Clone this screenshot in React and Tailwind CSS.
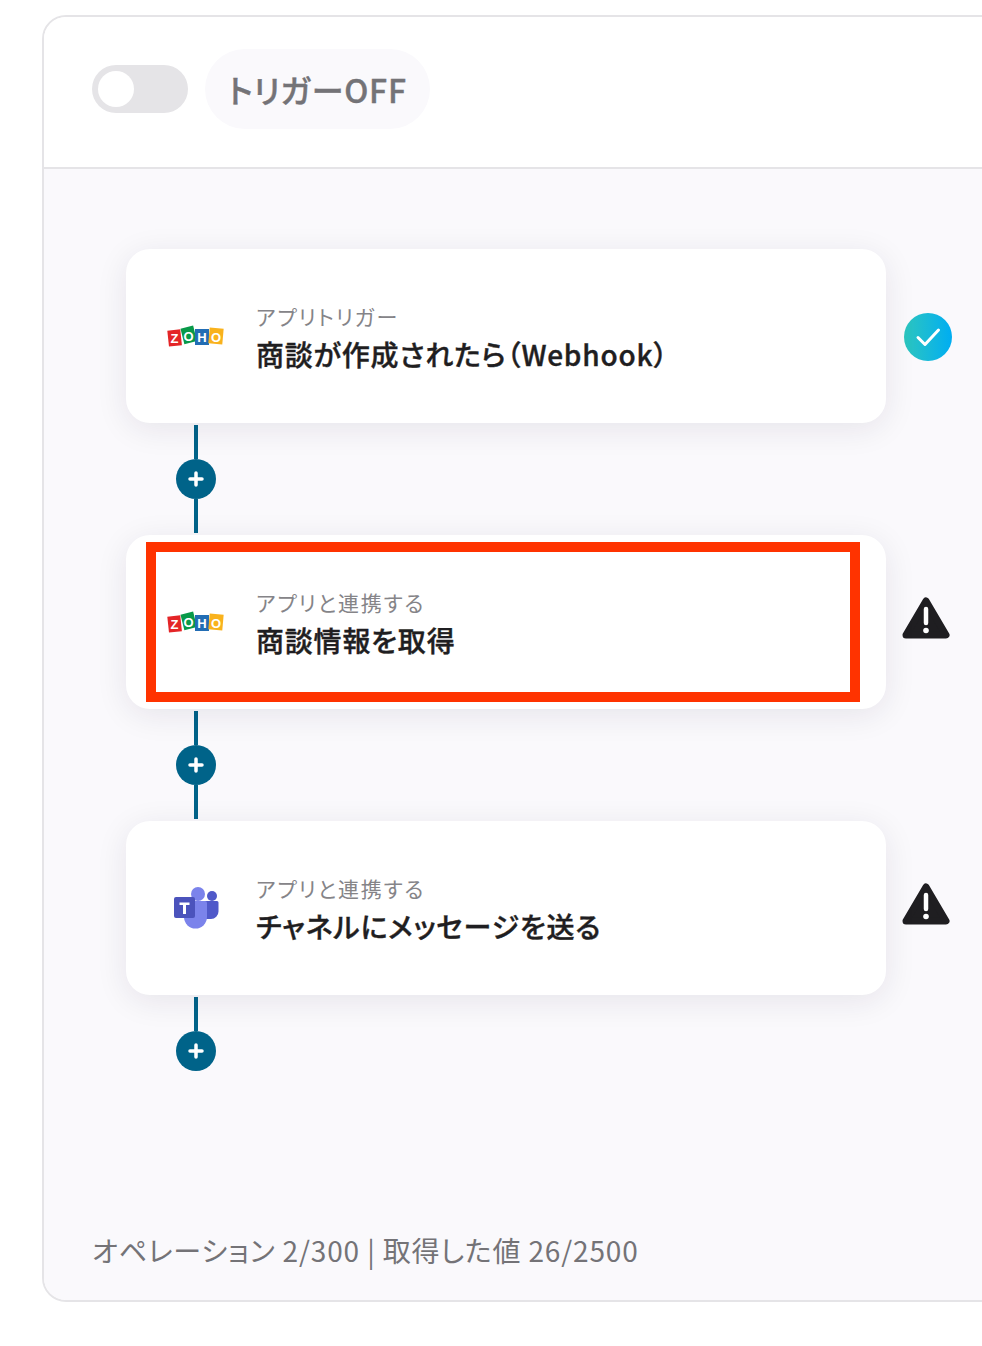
import React from "react";

const ZohoLogo = () => (
  <svg width="58" height="24" viewBox="0 0 58 24" className="block">
    <g style={{ fontFamily: '"Liberation Sans", sans-serif', fontWeight: 700, fontSize: "13px" }}>
      <rect x="1" y="6" width="13" height="16" fill="#e42527" transform="rotate(-6 7 13)" />
      <text x="7.5" y="19" textAnchor="middle" fill="#fff">Z</text>
      <rect x="15" y="3" width="13" height="16" fill="#089949" transform="rotate(-14 21 10)" />
      <text x="21.5" y="16.500" textAnchor="middle" fill="#fff">O</text>
      <rect x="28" y="5" width="14" height="16" fill="#226db4" />
      <text x="35" y="18" textAnchor="middle" fill="#fff">H</text>
      <rect x="42" y="4" width="14" height="16" fill="#f9b21d" transform="rotate(5 49 12)" />
      <text x="49" y="18" textAnchor="middle" fill="#fff">O</text>
    </g>
  </svg>
);

const TeamsLogo = () => (
  <svg width="46" height="44" viewBox="0 0 46 44" className="block">
    <circle cx="39" cy="10" r="5" fill="#5059c9" />
    <path d="M32 15h12a1.500 1.500 0 0 1 1.500 1.500v9a7.500 7.500 0 0 1-7.500 7.500h-6z" fill="#5059c9" />
    <circle cx="25" cy="8" r="7" fill="#7b83eb" />
    <path d="M12 15h20a2 2 0 0 1 2 2v14a11.500 11.500 0 0 1-23 0V16a1 1 0 0 1 1-1z" fill="#7b83eb" />
    <rect x="1" y="11" width="21" height="21" rx="2" fill="#4b53bc" />
    <path d="M6.500 16.500h10v2.600h-3.500v9h-3v-9h-3.500z" fill="#fff" />
  </svg>
);

const CheckBadge = () => (
  <div className="ml-[2px] mt-[2px] flex h-12 w-12 items-center justify-center rounded-full bg-gradient-to-r from-[#2cc5bd] to-[#00adf2]">
    <svg width="26" height="20" viewBox="0 0 26 20" fill="none">
      <path d="M3 10.500l7 7L23.500 3" stroke="#fff" strokeWidth="3" strokeLinecap="round" strokeLinejoin="round" />
    </svg>
  </div>
);

const WarnBadge = () => (
  <svg width="48" height="44" viewBox="0 0 48 44" className="mb-[7px] block">
    <path d="M24 4L44 38H4z" fill="#1f1e21" stroke="#1f1e21" strokeWidth="7" strokeLinejoin="round" />
    <path d="M24 12v14" stroke="#fff" strokeWidth="4.500" strokeLinecap="round" />
    <circle cx="24" cy="33.500" r="2.800" fill="#fff" />
  </svg>
);

const Connector = ({ last }) => (
  <div className="ml-[132px] mt-[2px] flex w-10 flex-col items-center">
    <div className="h-[34px] w-1 bg-[#006389]" />
    <div className="flex h-10 w-10 items-center justify-center rounded-full bg-[#006389]">
      <svg width="16" height="16" viewBox="0 0 16 16">
        <path d="M8 2v12M2 8h12" stroke="#fff" strokeWidth="3.500" strokeLinecap="round" />
      </svg>
    </div>
    {!last && <div className="mb-[2px] h-[34px] w-1 bg-[#006389]" />}
  </div>
);

const Step = ({ logo, label, title, badge, highlight }) => (
  <div className="ml-[82px] flex items-center">
    <div className="relative flex h-[174px] w-[760px] items-center rounded-[24px] bg-white shadow-[0_6px_32px_rgba(30,25,50,0.09)]">
      <div className="flex w-[130px] justify-center pl-[10px]">{logo}</div>
      <div className="mt-[4px]">
        <div className="text-[21px] leading-[30px] tracking-[1.85px] text-[#858488]">{label}</div>
        <div className="mt-[2px] text-[28px] font-medium leading-[42px] tracking-[0.8px] text-[#1f1e21] [-webkit-text-stroke:0.4px_#1f1e21]">{title}</div>
      </div>
      {highlight && (
        <div className="absolute left-[20px] top-[7px] h-[160px] w-[714px] border-[10px] border-[#ff3300]" />
      )}
    </div>
    <div className="ml-[16px] flex w-[50px] justify-start">{badge}</div>
  </div>
);

export default function App() {
  return (
    <div
      className="h-[1346px] w-[982px] overflow-hidden bg-white pl-[42px] pt-[15px] [font-feature-settings:'palt']"
      style={{ fontFamily: '"Noto Sans CJK JP", "Noto Sans", sans-serif' }}
    >
      <div className="flex h-[1287px] w-[1000px] flex-col overflow-hidden rounded-[24px] border-2 border-[#e5e4e7]">
        {/* Header */}
        <div className="flex h-[152px] items-center border-b-2 border-[#e5e4e7] bg-white pb-[6px] pl-[48px]">
          <div className="flex h-12 w-24 items-center rounded-full bg-[#e5e4e7] pl-[6px]">
            <div className="h-9 w-9 rounded-full bg-white" />
          </div>
          <div className="ml-[17px] flex h-20 w-[225px] items-center justify-center rounded-full bg-[#faf9fc] text-[32px] font-medium tracking-[0.8px] text-[#747377] [-webkit-text-stroke:0.4px_#747377]">
            トリガーOFF
          </div>
        </div>

        {/* Flow */}
        <div className="flex flex-1 flex-col bg-[#faf9fc] pt-[80px]">
          <Step logo={<ZohoLogo />} label="アプリトリガー" title="商談が作成されたら（Webhook）" badge={<CheckBadge />} />
          <Connector />
          <Step logo={<ZohoLogo />} label="アプリと連携する" title="商談情報を取得" badge={<WarnBadge />} highlight />
          <Connector />
          <Step logo={<TeamsLogo />} label="アプリと連携する" title="チャネルにメッセージを送る" badge={<WarnBadge />} />
          <Connector last />
          <div className="mt-auto pb-[29px] pl-[48px] text-[28px] leading-[42px] tracking-[0.85px] text-[#747377]">
            オペレーション 2/300 | 取得した値 26/2500
          </div>
        </div>
      </div>
    </div>
  );
}
